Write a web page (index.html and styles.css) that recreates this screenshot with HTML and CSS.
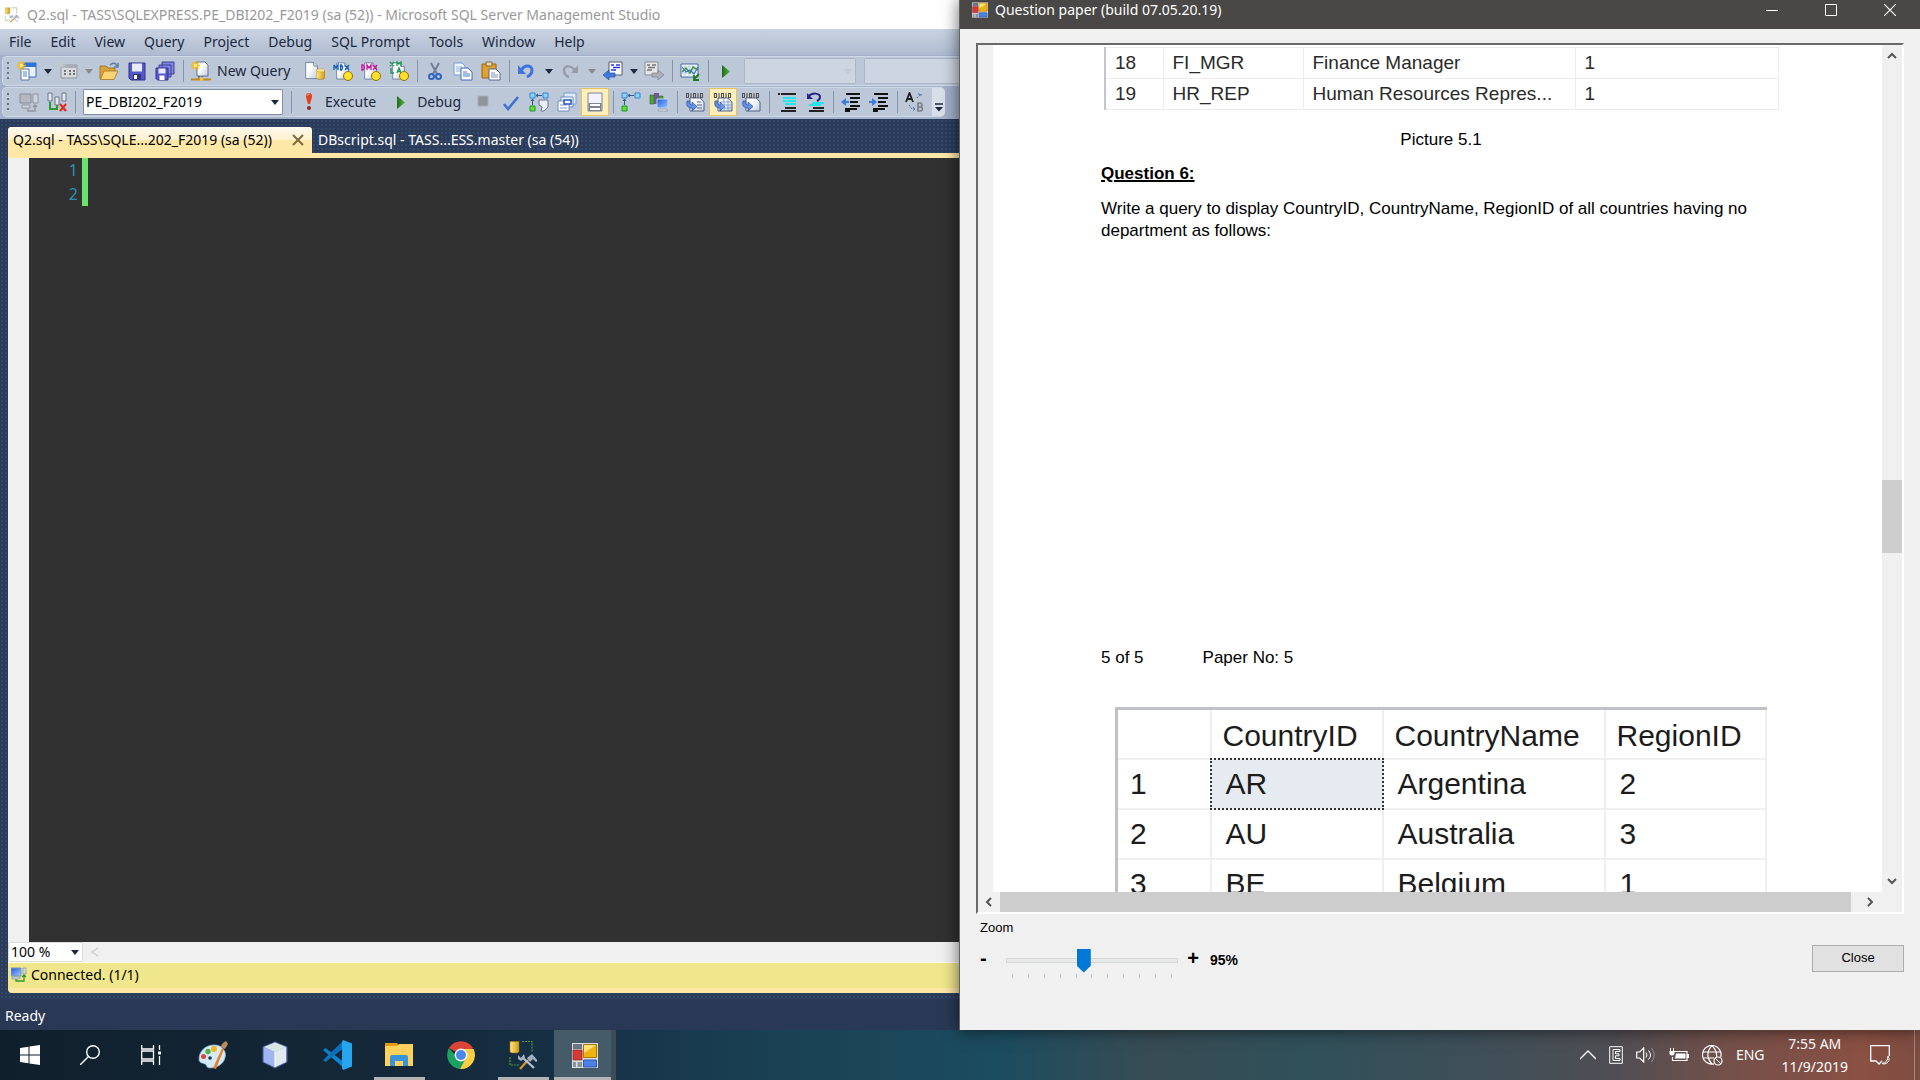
FILE: index.html
```html
<!DOCTYPE html>
<html lang="en">
<head>
<meta charset="utf-8">
<title>Desktop</title>
<link rel="stylesheet" href="styles.css">
</head>
<body>
<svg class="defs" aria-hidden="true">
  <defs>
    <linearGradient id="gold" x1="0" x2="1"><stop offset="0" stop-color="#ffe88a"/><stop offset="1" stop-color="#d39a16"/></linearGradient>
    <linearGradient id="sheet" x1="0" y1="0" x2="1" y2="1"><stop offset="0.4" stop-color="#fff"/><stop offset="1" stop-color="#bccbe0"/></linearGradient>
    <linearGradient id="leaf" x1="0" x2="1"><stop offset="0" stop-color="#1d6b1d"/><stop offset="1" stop-color="#55b83c"/></linearGradient>
    <linearGradient id="screen" x1="0" x2="1" y2="1"><stop offset="0" stop-color="#1e5be0"/><stop offset="1" stop-color="#9cc8ff"/></linearGradient>
    <symbol id="caret" viewBox="0 0 8 5"><path d="M0 0h8L4 5z" fill="currentColor"/></symbol>
    <symbol id="play" viewBox="0 0 20 20"><path d="M6 4v13l8-6.500z" fill="url(#leaf)"/></symbol>
    <symbol id="spark" viewBox="0 0 10 10"><path d="M5 0v10M0 5h10M1.500 1.500l7 7M8.500 1.500l-7 7" stroke="#f5b81c" stroke-width="1.500"/><circle cx="5" cy="5" r="2" fill="#fff06a"/></symbol>
    <symbol id="page" viewBox="0 0 20 20"><path d="M3 1h9l4 4v14H3z" fill="url(#sheet)" stroke="#6b7f9c"/><path d="M12 1v4h4" fill="#dfe8f5" stroke="#6b7f9c"/></symbol>
    <symbol id="cylinder" viewBox="0 0 10 12"><path d="M0 2v8c0 2.500 10 2.500 10 0V2z" fill="url(#gold)" stroke="#9a6e10" stroke-width=".7"/><ellipse cx="5" cy="2" rx="4.700" ry="1.700" fill="#ffec9c" stroke="#b98a1c" stroke-width=".6"/></symbol>
    <symbol id="bits" viewBox="0 0 20 20"><path d="M5 6h10l4 4v9H5z" fill="url(#sheet)" stroke="#51668c"/><path d="M1.500 1.500h2v4h-2zM6 1v5M8.500 1.500h2v4h-2zM13 1v5M15.500 1.500h2v4h-2z" fill="none" stroke="#555" stroke-width="1.100"/><path d="M2 9c-1 5 1 7 5 7v3l5-4.500L7 10v3c-2 0-3-1-2-4z" fill="#5f92e8" stroke="#274b9a" stroke-width=".7"/></symbol>
    <symbol id="nodes" viewBox="0 0 20 20"><path d="M1 1h5v5H1zM14 1h5v5h-5z" fill="#8fd4ff" stroke="#2b86d9"/><path d="M1 14h5v5H1z" fill="#5de03c" stroke="#1e9a1e"/><path d="M3.500 7v6M2 9l1.500-2L5 9M7 3.500h6M9 2L7 3.500 9 5" fill="none" stroke="#365a86"/></symbol>
    <symbol id="ssms" viewBox="0 0 28 30"><path d="M13 1.500h10v10M1 17v8h10" fill="none" stroke="#4f9a32" stroke-width="1.200" stroke-dasharray="2 1"/><path d="M1 1.500v10c0 2 9 2 9 0v-10z" fill="url(#gold)" stroke="#a8750c" stroke-width=".6"/><path d="M11 29l8-9" stroke="#d5982c" stroke-width="2.200"/><path d="M13 17l12 11" stroke="#b8c4d6" stroke-width="2.200"/><path d="M9 15l3 3 3-4 1 4-4 3-3-2zM18 18l5-4 6 7-2 1-3-3-3 3z" fill="#a5b0c2"/></symbol>
    <symbol id="form" viewBox="0 0 26 25"><path d="M0 0h26v25H0z" fill="#dcdcdc"/><path d="M1 1h9v5H1z" fill="#697786"/><path d="M1 7h9v10H1z" fill="#d43a38" stroke="#8e1f1f" stroke-width=".7"/><path d="M1 19h3v5H1zM5.500 19H10v5H5.500z" fill="#8a949e"/><path d="M11.500 1.500h13v13h-13z" fill="#f1b20e" stroke="#a87804"/><path d="M12 2h12l-12 8z" fill="#ffe27b"/><path d="M11.500 17h13v7h-13z" fill="#4d80e4" stroke="#2c57ad"/></symbol>
  </defs>
</svg>

<div class="workspace">
  <main class="studio">
    <header class="studio-title">
      <svg class="i16" viewBox="0 0 28 30"><use href="#ssms"/></svg>
      <h1>Q2.sql - TASS\SQLEXPRESS.PE_DBI202_F2019 (sa (52)) - Microsoft SQL Server Management Studio</h1>
    </header>
    <nav class="menu">
      <button>File</button><button>Edit</button><button>View</button><button>Query</button><button>Project</button><button>Debug</button><button>SQL Prompt</button><button>Tools</button><button>Window</button><button>Help</button>
    </nav>
    <div class="toolbars">
      <div class="toolbar">
        <span class="grip"></span>
        <button class="tool" aria-label="New project"><svg class="i20" viewBox="0 0 20 20"><path d="M6 2h13v14H6z" fill="#e8f1fd" stroke="#3b6cb8"/><path d="M6 2h13v4H6z" fill="#2f72d8"/><path d="M4 8h8v11H4z" fill="#fff" stroke="#5578a8"/><path d="M6 11h4M6 13h4M6 15h4" stroke="#4a83cf"/><use href="#spark" width="9" height="9"/></svg></button>
        <button class="drop" aria-label="New project options"><svg class="caret"><use href="#caret"/></svg></button>
        <button class="tool dim" aria-label="Add item"><svg class="i20" viewBox="0 0 20 20"><path d="M3 4h16v13H3z" fill="#d6d9de" stroke="#8f959e"/><path d="M3 4h16v3H3z" fill="#a9aeb6"/><path d="M6 10h2m3 0h2m2 0h2M6 13h2m3 0h2m2 0h2" stroke="#777" stroke-width="2"/><path d="M4 0v8M0 4h8M1 1l6 6M7 1L1 7" stroke="#c6c9cd"/></svg></button>
        <button class="drop dim" aria-label="Add item options"><svg class="caret"><use href="#caret"/></svg></button>
        <button class="tool" aria-label="Open"><svg class="i20" viewBox="0 0 20 20"><path d="M1 5h6l2 2h7v4H6L2 18H1z" fill="#d9a33a" stroke="#94691c" stroke-width=".8"/><path d="M5 10h14l-4 8.500H1.500z" fill="#f9d273" stroke="#a87a20" stroke-width=".8"/><path d="M11 4c3-3 6-2 7 1m1-3v4h-4" fill="none" stroke="#5d7ea8" stroke-width="1.500"/></svg></button>
        <button class="tool" aria-label="Save"><svg class="i20" viewBox="0 0 20 20"><path d="M2 2h16v17H4l-2-2z" fill="#5559c8" stroke="#2e3192"/><path d="M5 2.500h10v8H5z" fill="#e8ebfa"/><path d="M6 13h8v6H6z" fill="#33387e"/><path d="M7 14h3v4H7z" fill="#fff"/></svg></button>
        <button class="tool" aria-label="Save all"><svg class="i20" viewBox="0 0 20 20"><path d="M7 1h12v12H7zM4 4h12v12H4z" fill="#8084dc" stroke="#3e4199"/><path d="M1 7h12v12H2.500L1 17.500z" fill="#5559c8" stroke="#2e3192"/><path d="M3.500 7.500h7v5h-7z" fill="#e8ebfa"/><path d="M4.500 14.500h5V19h-5z" fill="#fff"/></svg></button>
        <span class="sep"></span>
        <button class="tool text-tool"><svg class="i20" viewBox="0 0 20 20"><path d="M6 1h8l3 3v11H6z" fill="url(#sheet)" stroke="#5f7491"/><path d="M8 15v3M11 15v3" stroke="#444"/><path d="M0 18.500h20" stroke="#c0871c" stroke-width="2"/><circle cx="10.500" cy="18" r="2" fill="#f5c443"/><use href="#spark" width="9" height="9"/></svg><span class="label">New Query</span></button>
        <button class="tool" aria-label="Database query"><svg class="i20" viewBox="0 0 20 20"><use href="#page" x="-2" width="18" height="19"/><use href="#cylinder" x="11" y="7" width="9" height="12"/></svg></button>
        <button class="tool" aria-label="MDX query"><svg class="i20" viewBox="0 0 20 20"><use href="#page" width="18" height="20" x="1"/><path d="M1 4v5M1 4l2 3 2-3v5M7.500 4v5h1q2-2.500 0-5zM12 4l4 5M16 4l-4 5" fill="none" stroke="#1c63b8" stroke-width="1.400"/><circle cx="15" cy="15" r="4.500" fill="#ffe02a" stroke="#8e7208"/></svg></button>
        <button class="tool" aria-label="DMX query"><svg class="i20" viewBox="0 0 20 20"><use href="#page" width="18" height="20" x="1"/><path d="M1 4v5h1q3-2.500 0-5zM6 9V4l2 3 2-3v5M12 4l4 5M16 4l-4 5" fill="none" stroke="#c01ca0" stroke-width="1.400"/><circle cx="15" cy="15" r="4.500" fill="#ffe02a" stroke="#8e7208"/></svg></button>
        <button class="tool" aria-label="XMLA query"><svg class="i20" viewBox="0 0 20 20"><use href="#page" width="18" height="20" x="1"/><path d="M1 1l4 4M5 1L1 5M8 5V1l2 2 2-2v4M2 7v5h3M8 12l2-5 2 5M9 10.500h2" fill="none" stroke="#1d9a58" stroke-width="1.400"/><circle cx="15" cy="15" r="4.500" fill="#ffe02a" stroke="#8e7208"/></svg></button>
        <span class="sep"></span>
        <button class="tool" aria-label="Cut"><svg class="i20" viewBox="0 0 20 20"><path d="M6 2l6 11M14 2L8 13" stroke="#6f7f99" stroke-width="2"/><circle cx="6.500" cy="15.500" r="2.500" fill="none" stroke="#2f66c4" stroke-width="2"/><circle cx="13.500" cy="15.500" r="2.500" fill="none" stroke="#2f66c4" stroke-width="2"/></svg></button>
        <button class="tool" aria-label="Copy"><svg class="i20" viewBox="0 0 20 20"><path d="M1 2h8l3 3v9H1z" fill="#eef4fd" stroke="#7f9cc8"/><path d="M3 6h6M3 8h6M3 10h6" stroke="#9ab6de"/><path d="M8 7h7l4 4v8H8z" fill="#fff" stroke="#3f69b4"/><path d="M10 11h4M10 13h7M10 15h7" stroke="#3f76d0"/></svg></button>
        <button class="tool" aria-label="Paste"><svg class="i20" viewBox="0 0 20 20"><path d="M1 3h14v14H1z" fill="#e2a02c" stroke="#93641a"/><path d="M5 1h6v4H5z" fill="#e8d9ac" stroke="#80683a"/><path d="M8 8h7l4 4v7H8z" fill="#fff" stroke="#54688c"/><path d="M10 12h4M10 14h7M10 16h7" stroke="#7d92b5"/></svg></button>
        <span class="sep"></span>
        <button class="tool" aria-label="Undo"><svg class="i20" viewBox="0 0 20 20"><path d="M4 10c3-7 11-6 11-1 0 4-3 6-5 7" fill="none" stroke="#3f74dc" stroke-width="3"/><path d="M1 4v9h8z" fill="#3f74dc"/></svg></button>
        <button class="drop wide" aria-label="Undo options"><svg class="caret"><use href="#caret"/></svg></button>
        <button class="tool" aria-label="Redo"><svg class="i20" viewBox="0 0 20 20"><path d="M15 10C12 4 4 4 4 9c0 4 2 6 5 7" fill="none" stroke="#979da6" stroke-width="2.500"/><path d="M18 4v8h-7z" fill="#979da6"/></svg></button>
        <button class="drop wide dim" aria-label="Redo options"><svg class="caret"><use href="#caret"/></svg></button>
        <button class="tool" aria-label="Navigate backward"><svg class="i20" viewBox="0 0 20 20"><path d="M6 1h13v13H6z" fill="#fff" stroke="#555b66"/><path d="M8 4h3M13 4h4M10 6.500h7M8 9h5" stroke="#2438e8" stroke-width="1.300"/><path d="M0 14l6-5v3h6v4H6v3z" fill="#3f7be0" stroke="#274fa8" stroke-width=".7"/></svg></button>
        <button class="drop" aria-label="Navigation history"><svg class="caret"><use href="#caret"/></svg></button>
        <button class="tool" aria-label="Navigate forward"><svg class="i20" viewBox="0 0 20 20"><path d="M1 1h13v13H1z" fill="#e4e6e9" stroke="#8b9099"/><path d="M3 4h3M8 4h4M4 6.500h7M3 9h5" stroke="#777" stroke-width="1.300"/><path d="M20 14l-6-5v3H8v4h6v3z" fill="#abb0b8" stroke="#7d828b" stroke-width=".7"/></svg></button>
        <span class="sep"></span>
        <button class="tool" aria-label="Activity monitor"><svg class="i20" viewBox="0 0 20 20"><path d="M1 3h17v13H1z" fill="#f2f8ff" stroke="#49699c"/><path d="M1 6h17M1 9h17M1 12h17M5 3v13M9 3v13M13 3v13" stroke="#aec3de" stroke-width=".7"/><path d="M2 11l4-4 4 5 3-6 5 3" fill="none" stroke="#3e9a2c" stroke-width="1.500"/><path d="M2 6l4 5 4-2 4 4 4-7" fill="none" stroke="#3f70d2" stroke-width="1.200"/><path d="M19 13l-5 5m0-4v5h5" fill="none" stroke="#1c7a1c" stroke-width="1.800"/></svg></button>
        <span class="sep"></span>
        <button class="tool" aria-label="Start"><svg class="i20"><use href="#play"/></svg></button>
        <div class="combo muted"><select aria-label="Solution configuration" disabled><option></option></select><svg class="caret"><use href="#caret"/></svg></div>
        <div class="combo muted tail"><select aria-label="Solution platform" disabled><option></option></select></div>
      </div>
      <div class="toolbar second">
        <span class="grip"></span>
        <button class="tool" aria-label="Connect"><svg class="i20" viewBox="0 0 20 20"><path d="M1 2h11v9H1z" fill="#b4b9c1" stroke="#888e98"/><path d="M3 13h8v3H3zM14 2h5v9h-5z" fill="#cfd3d9" stroke="#8f959e"/><path d="M9 17v2h7v-6m-2 2l2-2 2 2" fill="none" stroke="#8f959e" stroke-width="1.300"/></svg></button>
        <button class="tool" aria-label="Change connection"><svg class="i20" viewBox="0 0 20 20"><path d="M1 1h4v8H1zM15 1h4v8h-4zM8 5h4v8H8z" fill="#e3e7ee" stroke="#6d7686"/><path d="M3 10v7h8m-1-4v4" fill="none" stroke="#2c9a2c" stroke-width="2"/><path d="M13 12l6 7M19 12l-6 7" stroke="#e8261a" stroke-width="2"/></svg></button>
        <span class="sep"></span>
        <div class="combo database"><select aria-label="Available databases"><option>PE_DBI202_F2019</option></select><svg class="caret"><use href="#caret"/></svg></div>
        <span class="sep"></span>
        <button class="tool text-tool"><svg class="i20" viewBox="0 0 20 20"><path d="M7 4c0-4 6-4 6 0 0 3-1.500 5-2 8H9c-.5-3-2-5-2-8z" fill="#e0401c"/><path d="M8.500 4c0-1.500 1-2 2-2" stroke="#ffb49a" fill="none"/><circle cx="10" cy="16" r="2" fill="#8e2c20"/></svg><span class="label">Execute</span></button>
        <button class="tool text-tool debug"><svg class="i20"><use href="#play"/></svg><span class="label">Debug</span></button>
        <button class="tool" aria-label="Stop"><svg class="i20" viewBox="0 0 20 20"><path d="M5 4h10v10H5z" fill="#8f949c" stroke="#a9aeb6"/></svg></button>
        <button class="tool" aria-label="Parse"><svg class="i20" viewBox="0 0 20 20"><path d="M3 12l4 5L17 5" fill="none" stroke="#3f70d2" stroke-width="2.600"/></svg></button>
        <button class="tool" aria-label="Estimated plan"><svg class="i20" viewBox="0 0 20 20"><use href="#nodes"/><path d="M10 8h9v7l-4 4h-3l1-4-3-2z" fill="#e8ecf4" stroke="#6b7689"/></svg></button>
        <button class="tool" aria-label="Query options"><svg class="i20" viewBox="0 0 20 20"><path d="M7 1h12v11H7z" fill="#dfeafa" stroke="#7f9cc8"/><path d="M4 5h12v10H4z" fill="#eef4fd" stroke="#6f8fc0"/><path d="M1 9h11v10H1z" fill="#fff" stroke="#6f8fc0"/><path d="M3 13h7M3 16h7" stroke="#7f9cc8"/><path d="M7 8h7v4H7z" fill="#fff" stroke="#2456b8" stroke-width="1.500"/></svg></button>
        <button class="tool on" aria-label="IntelliSense"><svg class="i20" viewBox="0 0 20 20"><path d="M3 1h14v18H3z" fill="#f0f3f9" stroke="#7d8798"/><path d="M3.500 11h13v8h-13z" fill="#7b8493"/><path d="M5 13h10M5 17h10" stroke="#fff" stroke-width="2"/></svg></button>
        <span class="sep"></span>
        <button class="tool" aria-label="Actual plan"><svg class="i20"><use href="#nodes"/></svg></button>
        <button class="tool" aria-label="Client statistics"><svg class="i20" viewBox="0 0 20 20"><path d="M1 3h4v9H1zM10 4h4v8h-4z" fill="#4ba82c" stroke="#3c5c36" stroke-width=".6"/><path d="M5 1h5v11H5z" fill="#6a5a9a"/><path d="M8 7h11v9H8z" fill="url(#screen)" stroke="#c8d4e6"/><path d="M10 17h8l1 2H9z" fill="#dbe2ec" stroke="#7d8798" stroke-width=".6"/></svg></button>
        <span class="sep"></span>
        <button class="tool" aria-label="Results to text"><svg class="i20" viewBox="0 0 20 20"><use href="#bits"/><path d="M12 10h4M12 13h5M12 16h5" stroke="#51668c"/></svg></button>
        <button class="tool on" aria-label="Results to grid"><svg class="i20" viewBox="0 0 20 20"><use href="#bits"/><path d="M8 10h11M8 13h11M11 16h8M11 6v13M15 7v12" stroke="#7f9cc8" stroke-width=".9"/></svg></button>
        <button class="tool" aria-label="Results to file"><svg class="i20"><use href="#bits"/></svg></button>
        <span class="sep"></span>
        <button class="tool" aria-label="Comment"><svg class="i20" viewBox="0 0 20 20"><path d="M1 2h2M4 2h15M8 16h11M4 19h15" stroke="#222" stroke-width="1.800"/><path d="M6 6h13M6 9h13M8 12h11" stroke="#25e4ee" stroke-width="2"/></svg></button>
        <button class="tool" aria-label="Uncomment"><svg class="i20" viewBox="0 0 20 20"><path d="M8 16h11M4 19h15" stroke="#222" stroke-width="1.800"/><path d="M7 11h12M4 13h12" stroke="#25e4ee" stroke-width="2"/><path d="M3 5c4-5 12-4 12 0 0 2-1 3-3 4" fill="none" stroke="#23238e" stroke-width="2"/><path d="M2 1v6h6z" fill="#23238e"/></svg></button>
        <span class="sep"></span>
        <button class="tool" aria-label="Decrease indent"><svg class="i20" viewBox="0 0 20 20"><path d="M5 2h14M9 6h10M9 10h8M9 14h10M4 17h12M4 19h5" stroke="#111" stroke-width="2"/><path d="M0 10l5-4v3h3v2H5v3z" fill="#3f7be0"/></svg></button>
        <button class="tool" aria-label="Increase indent"><svg class="i20" viewBox="0 0 20 20"><path d="M5 2h14M9 6h10M9 10h8M9 14h10M4 17h12M4 19h5" stroke="#111" stroke-width="2"/><path d="M8 10L3 6v3H0v2h3v3z" fill="#3f7be0"/></svg></button>
        <span class="sep"></span>
        <button class="tool" aria-label="Template parameters"><svg class="i20" viewBox="0 0 20 20"><path d="M1 10L4.500 1 8 10M2.500 7h4" fill="none" stroke="#222" stroke-width="1.800"/><path d="M13 11v8h3q3-2 0-4 2-2 0-4zM13 15h3" fill="none" stroke="#7a7f88" stroke-width="1.600"/><path d="M12 6l4-4m-3 0h3v3M4 13l3 4h3m-2-2l2 2-2 2" fill="none" stroke="#4f6f9e" stroke-dasharray="2 1"/></svg></button>
        <button class="overflow" aria-label="Toolbar options"><svg viewBox="0 0 10 9"><path d="M1 1h8" stroke="#1b293e" stroke-width="1.500"/><path d="M1 4h8L5 8.500z" fill="#1b293e"/></svg></button>
      </div>
    </div>
    <div class="dock">
      <div class="tabs">
        <button class="tab active"><span>Q2.sql - TASS\SQLE...202_F2019 (sa (52))</span><svg viewBox="0 0 12 12"><path d="M1 1l10 10M11 1L1 11" stroke="#796a42" stroke-width="2"/></svg></button>
        <button class="tab">DBscript.sql - TASS...ESS.master (sa (54))</button>
      </div>
      <div class="editor">
        <div class="margin"></div>
        <ol class="lines"><li>1</li><li>2</li></ol>
      </div>
      <div class="zoombar">
        <div class="combo percent"><select aria-label="Editor zoom"><option>100 %</option></select><svg class="caret"><use href="#caret"/></svg></div>
        <svg class="arrow" viewBox="0 0 10 10"><path d="M8 1L2 5l6 4" fill="none" stroke="#cbcbcb" stroke-width="1.500"/></svg>
      </div>
      <div class="connection">
        <svg class="i16" viewBox="0 0 16 16"><path d="M0 1h10v8H0z" fill="url(#screen)" stroke="#7d92b5"/><path d="M1 10h8v2H1zM12 1h3v6h-3z" fill="#cfd8e6" stroke="#7a8698" stroke-width=".6"/><path d="M5 12v2h8V8m-2 2l2-2 2 2" fill="none" stroke="#2c9a2c" stroke-width="1.300"/></svg>
        <span>Connected. (1/1)</span>
      </div>
    </div>
    <footer class="ready">Ready</footer>
  </main>

  <section class="paper" aria-label="Question paper">
    <header class="paper-title">
      <svg class="i16" viewBox="0 0 26 25"><use href="#form"/></svg>
      <h2>Question paper (build 07.05.20.19)</h2>
      <div class="window-buttons">
        <button aria-label="Minimize"><svg viewBox="0 0 12 12"><path d="M0 6.500h12" stroke="#fff"/></svg></button>
        <button aria-label="Maximize"><svg viewBox="0 0 12 12"><path d="M.5.500h11v11H.5z" fill="none" stroke="#fff"/></svg></button>
        <button aria-label="Close window"><svg viewBox="0 0 12 12"><path d="M0 0l12 12M12 0L0 12" stroke="#fff" stroke-width="1.200"/></svg></button>
      </div>
    </header>
    <div class="paper-body">
      <div class="viewer">
        <article class="page">
          <table class="jobs">
            <tr><td>18</td><td>FI_MGR</td><td>Finance Manager</td><td>1</td></tr>
            <tr><td>19</td><td>HR_REP</td><td>Human Resources Repres...</td><td>1</td></tr>
          </table>
          <p class="caption">Picture 5.1</p>
          <h3>Question 6:</h3>
          <p class="task">Write a query to display CountryID, CountryName, RegionID of all countries having no<br>department as follows:</p>
          <p class="folio"><span>5 of 5</span><span>Paper No: 5</span></p>
          <table class="countries">
            <thead><tr><th></th><th>CountryID</th><th>CountryName</th><th>RegionID</th></tr></thead>
            <tbody>
              <tr><td>1</td><td class="picked">AR</td><td>Argentina</td><td>2</td></tr>
              <tr><td>2</td><td>AU</td><td>Australia</td><td>3</td></tr>
              <tr><td>3</td><td>BE</td><td>Belgium</td><td>1</td></tr>
            </tbody>
          </table>
        </article>
        <div class="vbar">
          <svg viewBox="0 0 10 8"><path d="M1 6l4-4 4 4" fill="none" stroke="#555" stroke-width="2"/></svg>
          <div class="vtrack"><i class="thumb"></i></div>
          <svg viewBox="0 0 10 8"><path d="M1 2l4 4 4-4" fill="none" stroke="#555" stroke-width="2"/></svg>
        </div>
        <div class="hbar">
          <svg viewBox="0 0 8 10"><path d="M6 1L2 5l4 4" fill="none" stroke="#555" stroke-width="2"/></svg>
          <div class="htrack"><i class="thumb"></i></div>
          <svg viewBox="0 0 8 10"><path d="M2 1l4 4-4 4" fill="none" stroke="#555" stroke-width="2"/></svg>
        </div>
      </div>
      <div class="controls">
        <div class="zoom">
          <label for="zoom">Zoom</label>
          <div class="zoom-row">
            <b class="sign">-</b>
            <div class="slider">
              <input id="zoom" type="range" min="10" max="200" value="95">
              <div class="ticks"><i></i><i></i><i></i><i></i><i></i><i></i><i></i><i></i><i></i><i></i><i></i></div>
            </div>
            <b class="sign">+</b>
            <output for="zoom">95%</output>
          </div>
        </div>
        <button class="close">Close</button>
      </div>
    </div>
  </section>
</div>

<footer class="taskbar">
  <button class="sys" aria-label="Start menu"><svg width="20" height="20" viewBox="0 0 20 20"><path d="M0 3l8.500-1.200v7.700H0zM9.500 1.600L20 0v9.500H9.500zM0 10.500h8.500v7.700L0 17zM9.500 10.500H20V20L9.500 18.400z" fill="#fff"/></svg></button>
  <button class="sys" aria-label="Search"><svg width="20" height="20" viewBox="0 0 20 20"><circle cx="13" cy="7" r="6.300" fill="none" stroke="#fff" stroke-width="1.400"/><path d="M8.500 11.500L0 20" stroke="#fff" stroke-width="1.400"/></svg></button>
  <button class="sys" aria-label="Task view"><svg width="20" height="20" viewBox="0 0 20 20"><path d="M.7 0v4h11.800V0M.7 6h11.800v8H.7zM.7 20v-4h11.800v4M18.500 0v5M18.500 11v9" fill="none" stroke="#fff" stroke-width="1.300"/><path d="M17 6.500h3v3h-3z" fill="#fff"/></svg></button>
  <button class="app" aria-label="Paint"><svg width="30" height="28" viewBox="0 0 30 28"><path d="M1 18C1 9 9 3 18 4c7 1 11 7 9 13-2 7-9 10-15 10-4 0-3-3-5-4-3-1-6-1-6-5z" fill="#d4eaf7" stroke="#7ba9c8" stroke-width=".7"/><circle cx="5.500" cy="15.500" r="2.500" fill="#e0453a"/><circle cx="10" cy="10.500" r="2.700" fill="#52b04a"/><circle cx="16" cy="8" r="3" fill="#f5b326"/><circle cx="12" cy="17" r="1.800" fill="#1c3650"/><path d="M15 27l9-20 2 1-8 20z" fill="#e58432"/><path d="M23 6c0-3 2-4 5-6l2 3-3 5z" fill="#b98a5e"/></svg></button>
  <button class="app" aria-label="NetBeans"><svg width="26" height="28" viewBox="0 0 26 28"><path d="M1 6l12-5 12 5v15l-12 6L1 21z" fill="#93a8e4" stroke="#4c5ca2"/><path d="M2 6l11-4.500L24 6l-11 5z" fill="#d5e8e2"/><path d="M13 11l11-5v15l-11 5z" fill="#e0e9ef"/><path d="M2 6l11 5v15L2 21z" fill="#9eb5f0"/><path d="M13 11v15" stroke="#fff"/></svg></button>
  <button class="app" aria-label="Visual Studio Code"><svg width="30" height="30" viewBox="0 0 30 30"><path d="M1 10l2.500-2L23 23v6z" fill="#0a84d0"/><path d="M1 20l2.500 2L22 8V0z" fill="#0c70b8"/><path d="M21 0l9 3.500v23L21 30l-1-2V2z" fill="#26a4ee"/></svg></button>
  <button class="app running" aria-label="File Explorer"><svg width="28" height="24" viewBox="0 0 28 24"><path d="M0 0h12l2 3H0z" fill="#e29b12"/><path d="M0 3h12l2-2h14v22H0z" fill="#fcd25c"/><path d="M5 23v-9q0-2 2-2h14q2 0 2 2v9h-5v-5h-8v5z" fill="#3b93dc"/></svg></button>
  <button class="app" aria-label="Chrome"><svg width="28" height="28" viewBox="0 0 28 28"><path d="M14 14L2 7a14 14 0 0 1 24 0z" fill="#dc4437"/><path d="M14 14H8L2 7a14 14 0 0 0 11 21l7-11z" fill="#1ba260"/><path d="M14 8h12.600A14 14 0 0 1 13 28l6-11z" fill="#ffcd41"/><circle cx="14" cy="14" r="6.500" fill="#f4f4f4"/><circle cx="14" cy="14" r="5" fill="#4a86ec"/></svg></button>
  <button class="app running" aria-label="SQL Server Management Studio"><svg width="30" height="30" viewBox="0 0 28 30"><use href="#ssms"/></svg></button>
  <button class="app running current" aria-label="Question paper"><svg width="26" height="25" viewBox="0 0 26 25"><use href="#form"/></svg></button>
  <div class="tray">
    <svg width="16" height="10" viewBox="0 0 16 10"><path d="M0 9l8-8 8 8" fill="none" stroke="#fff" stroke-width="1.300"/></svg>
    <svg width="14" height="18" viewBox="0 0 14 18"><path d="M.7.700h12.600v16.600H.7zM4 3.500h7v2H6.500v2.300H10v2H6.500v2.700H11v2H4z" fill="none" stroke="#fff"/></svg>
    <svg width="20" height="16" viewBox="0 0 20 16"><path d="M.7 5h3l4-4v14l-4-4h-3z" fill="none" stroke="#fff" stroke-width="1.200"/><path d="M10 5.500q2 2.500 0 5M12.500 3.500q4 4.500 0 9" fill="none" stroke="#fff"/><path d="M15.500 1q5.500 7 0 14" fill="none" stroke="#8d8f92"/></svg>
    <svg width="20" height="14" viewBox="0 0 20 14"><path d="M5 3.500h13v9H3.500V9" fill="none" stroke="#fff" stroke-width="1.200"/><path d="M7 5.500h9.500v5H6zM18 6h2v4h-2zM.5 3h5v3q-2.500 3-5 0zM1 0h1v3H1zM4 0h1v3H4z" fill="#fff"/></svg>
    <svg width="21" height="21" viewBox="0 0 21 21"><path d="M12 18.800A9.300 9.300 0 1 1 18.800 12M1 7h17M1 13h11M10 .7c-6 6-5 13 0 18.300M10 .7c4 4 5 7 4.500 11" fill="none" stroke="#fff" stroke-width="1.200"/><circle cx="16" cy="16" r="4" fill="none" stroke="#fff" stroke-width="1.200"/><path d="M13 13l6 6" stroke="#fff"/></svg>
    <span class="lang">ENG</span>
    <time datetime="2019-11-09T07:55">7:55 AM<br>11/9/2019</time>
    <svg width="20" height="20" viewBox="0 0 20 20"><path d="M12 16l-3 3-3-3H.7V.7h18.600V11" fill="none" stroke="#fff" stroke-width="1.300"/><path d="M18 11q3 5-2 7.500-2 1-4 0 6-1 6-7.500z" fill="none" stroke="#fff"/></svg>
  </div>
  <span class="peek"></span>
</footer>
</body>
</html>
```
FILE: styles.css
```css
* { box-sizing: border-box; }

body {
  margin: 0;
  height: 100vh;
  display: flex;
  flex-direction: column;
  overflow: hidden;
  font: 14px/20px "Noto Sans", "Open Sans", sans-serif;
  color: #1b293e;
  background: #14293a;
}

button, select, input { font: inherit; color: inherit; margin: 0; }
button { padding: 0; border: 0; background: none; }
h1, h2, h3, p { margin: 0; font-size: inherit; font-weight: normal; }
svg { display: block; flex: none; }
.defs { position: absolute; width: 0; height: 0; }
.i16 { width: 16px; height: 16px; }
.i20 { width: 20px; height: 20px; }
.caret { width: 8px; height: 5px; }

.workspace {
  flex: 1;
  min-height: 0;
  display: grid;
  grid-template: minmax(0, 1fr) / minmax(0, 1fr) minmax(0, 1fr);
}

/* Management studio */
.studio { display: flex; flex-direction: column; min-width: 0; overflow: hidden; background: #2b3b5a; }
.studio-title { display: flex; align-items: center; gap: 7px; height: 29px; padding-left: 4px; background: #fff; color: #999; white-space: nowrap; }
.menu { display: flex; gap: 19px; height: 26px; padding-left: 9px; background: linear-gradient(#cad3e2, #aebbd0); }
.menu button { white-space: nowrap; }

.toolbars { background: #a3b1ca; padding: 1px 0 2px; display: flex; flex-direction: column; gap: 1px; }
.toolbar {
  display: flex;
  align-items: center;
  height: 30px;
  margin-left: 2px;
  padding-left: 4px;
  background: #bcc7d8;
  border: 1px solid #cfd8e5;
  border-right: 0;
  border-radius: 5px 0 0 5px;
  overflow: hidden;
}
.toolbar.second { margin-right: 15px; border-radius: 5px; }
.grip { width: 2px; height: 18px; margin-right: 4px; flex: none; background: repeating-linear-gradient(#66748c 0 2px, transparent 2px 5px); }
.toolbar.second .grip { margin-right: 6px; }
.tool { display: flex; align-items: center; justify-content: center; width: 28px; height: 28px; flex: none; }
.text-tool { width: auto; padding: 0 11px 0 4px; gap: 6px; white-space: nowrap; }
.debug { padding-right: 8px; }
.tool.on { background: #ffefbb; border: 1px solid #e5c365; }
.drop { display: flex; justify-content: center; width: 13px; flex: none; }
.drop.wide { width: 15px; }
.dim { color: #8a8a8a; }
.sep { width: 1px; height: 22px; margin: 0 3px 0 4px; flex: none; background: #8494ac; }

.combo { display: grid; align-items: center; flex: none; }
.combo select { grid-area: 1 / 1; width: 100%; height: 100%; appearance: none; border: 1px solid #8591a8; border-radius: 1px; background: #fff; color: #000; padding: 0 2px; }
.combo .caret { grid-area: 1 / 1; justify-self: end; margin-right: 4px; pointer-events: none; }
.muted { width: 112px; height: 26px; margin: 0 4px; color: #9aa3b3; }
.muted select { background: #d5dbe6; border-color: #a5b0c2; }
.tail { width: 160px; }
.database { width: 200px; height: 26px; margin: 0 4px; }
.overflow { margin-left: auto; width: 13px; height: 28px; display: flex; align-items: flex-end; justify-content: center; padding-bottom: 4px; background: #d8dfe9; flex: none; }
.overflow svg { width: 10px; height: 9px; }

.dock {
  flex: 1;
  min-height: 0;
  display: flex;
  flex-direction: column;
  padding: 8px 0 7px 8px;
  background: #2b3b5a radial-gradient(#35496a 1px, transparent 1px) 0 0 / 4px 4px;
}
.tabs { display: flex; border-bottom: 5px solid #ffe8a6; }
.tab { height: 26px; padding: 0 6px; color: #fff; white-space: nowrap; }
.tab.active { display: flex; align-items: center; justify-content: space-between; width: 304px; padding: 0 8px 0 5px; border-radius: 3px 3px 0 0; background: linear-gradient(#fffaf0, #fff1cc 50%, #ffe8a6 50%); color: #000; }
.tab svg { width: 12px; height: 12px; }
.editor { flex: 1; display: flex; min-height: 0; background: #313131; }
.margin { width: 21px; background: #f0f0f0; }
.lines { list-style: none; margin: 0; padding: 0; width: 59px; font-size: 16px; line-height: 24px; color: #2b91af; }
.lines li { height: 24px; padding-right: 4px; border-right: 6px solid #6be26b; text-align: right; }
.zoombar { display: flex; align-items: center; gap: 7px; height: 21px; background: #f0f0f0; border-bottom: 1px solid #fff; }
.percent { width: 75px; height: 20px; }
.percent select { border-color: #dcdcdc; line-height: 16px; }
.arrow { width: 10px; height: 10px; }
.connection { display: flex; align-items: center; gap: 4px; height: 30px; padding: 0 3px 2px; background: #f0e68c; border-bottom: 5px solid #ffe8a6; border-radius: 0 0 0 4px; color: #000; }
.ready { height: 30px; padding: 6px 5px; background: #293955; color: #fff; }

/* Question paper window */
.paper { position: relative; display: flex; flex-direction: column; min-width: 0; margin-left: -1px; background: #f0f0f0; border-left: 1px solid #5f6368; box-shadow: 0 0 16px rgba(0, 0, 0, .6); font-family: "Liberation Sans", Arial, sans-serif; color: #000; }
.paper-title { display: flex; align-items: center; height: 29px; padding: 0 24px 10px 12px; gap: 7px; background: #4a4846; color: #fff; font-family: "Noto Sans", sans-serif; }
.window-buttons { display: flex; gap: 47px; margin-left: auto; }
.window-buttons svg { width: 12px; height: 12px; }
.paper-body { flex: 1; min-height: 0; display: flex; flex-direction: column; padding: 14px 16px 52px; }
.viewer {
  flex: 1;
  min-height: 0;
  display: grid;
  grid-template: minmax(0, 1fr) 20px / minmax(0, 1fr) 20px;
  border: 2px solid;
  border-color: #696969 #fff #fff #696969;
}
.page { margin-left: 15px; padding-left: 108px; background: #fff; overflow: hidden; font-size: 17px; line-height: 22px; }
.vbar { display: flex; flex-direction: column; align-items: center; justify-content: space-between; padding: 7px 0; }
.vbar svg { width: 10px; height: 8px; }
.vtrack { flex: 1; align-self: stretch; display: flex; flex-direction: column; padding-top: 420px; }
.vtrack .thumb { height: 73px; }
.thumb { background: #cdcdcd; }
.hbar { grid-column: 1 / -1; display: flex; align-items: center; padding: 0 28px 0 7px; gap: 7px; }
.hbar svg { width: 8px; height: 10px; }
.htrack { flex: 1; align-self: stretch; display: flex; margin-right: 8px; }
.htrack .thumb { flex: 1; }

table { border-collapse: collapse; table-layout: fixed; }
th { font-weight: normal; text-align: left; }
.jobs { width: 675px; margin: 2px 0 0 3px; border-left: 2px solid #c4c4cc; font-size: 19px; color: #2a2a2a; }
.jobs td { height: 31px; padding: 0 0 0 9px; border: 1px solid #ececec; border-left-width: 0; }
.jobs td:nth-child(1) { width: 58px; }
.jobs td:nth-child(2) { width: 140px; }
.jobs td:nth-child(3) { width: 272px; }
.caption { width: 680px; margin-top: 19px; text-align: center; }
h3 { margin-top: 12px; font-size: 17px; font-weight: bold; text-decoration: underline; text-decoration-thickness: 2px; }
.task { margin-top: 13px; white-space: nowrap; }
.folio { display: flex; gap: 59px; margin-top: 405px; }
.countries { width: 652px; margin: 38px 0 0 14px; border-top: 3px solid #c0c0c8; border-left: 3px solid #c0c0c8; font-size: 30px; color: #1c1c1c; }
.countries th, .countries td { height: 50px; padding: 0 0 0 14px; border: 2px solid #efefef; }
.countries th { padding: 4px 0 0 11px; }
.countries th:nth-child(1) { width: 94px; }
.countries th:nth-child(2) { width: 172px; }
.countries th:nth-child(3) { width: 222px; }
.countries td:first-child { padding-left: 12px; }
.countries .picked { background: #e6ebf1; outline: 2px dotted #333; outline-offset: -1px; }

.controls { display: flex; justify-content: space-between; align-items: center; padding-left: 4px; font-size: 13px; }
.zoom { display: flex; flex-direction: column; gap: 10px; padding-top: 4px; }
.zoom label { line-height: 20px; }
.zoom-row { display: flex; align-items: flex-start; }
.sign { width: 26px; font-size: 20px; line-height: 20px; }
.slider + .sign { width: 24px; text-align: center; margin-left: 3px; }
.zoom output { line-height: 24px; font-size: 14px; font-weight: bold; margin-left: 5px; }
.slider { width: 172px; }
.slider input { display: block; appearance: none; width: 100%; height: 24px; background: none; }
.slider input::-webkit-slider-runnable-track { height: 5px; background: #e7eaea; border: 1px solid #d6d6d6; }
.slider input::-webkit-slider-thumb { appearance: none; width: 14px; height: 24px; margin-top: -10px; background: #0078d7; clip-path: polygon(0 0, 100% 0, 100% 72%, 50% 100%, 0 72%); }
.ticks { display: flex; justify-content: space-between; padding: 2px 6px 0; }
.ticks i { width: 1px; height: 4px; background: #c4c4c4; }
.close { width: 92px; height: 27px; margin-top: 24px; border: 1px solid #adadad; background: #e1e1e1; }

/* Taskbar */
.taskbar {
  display: flex;
  height: 50px;
  color: #fff;
  background: linear-gradient(90deg, #101f2c, #14293a 22%, #17334a 32%, #1a4355 42%, #1c4c5f 52%, #384c54 60%, #30505a 68%, #3f4f58 77%, #4f4e54 84%, #74504a 90%, #8a5043 97%, #7d4d42);
}
.sys { width: 60px; display: grid; place-items: center; }
.app { width: 62px; display: grid; place-items: center; }
.sys:nth-child(3) { width: 62px; }
.running { background: linear-gradient(#b3b3b3, #b3b3b3) 50% 100% / 51px 3px no-repeat; }
.current { background: linear-gradient(#b3b3b3, #b3b3b3) 0 100% / 100% 3px no-repeat #465b69; box-shadow: inset -5px 0 #3b4c57; }
.tray { margin-left: auto; display: flex; align-items: center; gap: 13px; padding-right: 24px; }
.lang { margin: 0 4px 0 0; }
time { line-height: 23px; text-align: center; margin-right: 9px; }
.peek { width: 6px; border-left: 1px solid #a48780; }
```
